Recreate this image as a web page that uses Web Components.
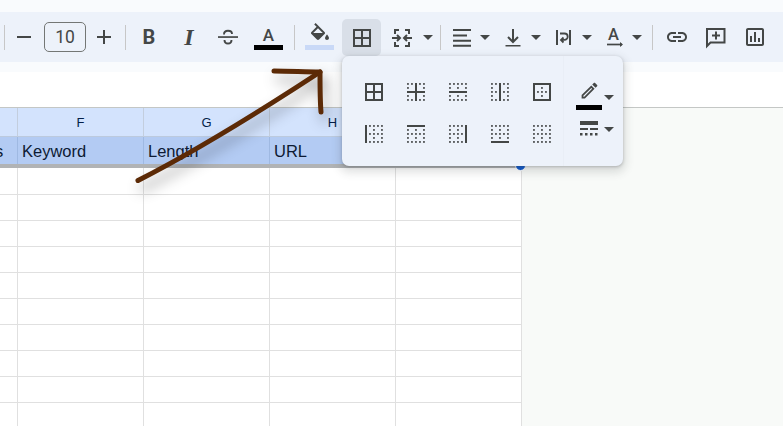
<!DOCTYPE html>
<html>
<head>
<meta charset="utf-8">
<title>Sheets borders</title>
<style>
    html, body { margin: 0; height: 100%; overflow: hidden; background: #fff; }
    body { display: flex; flex-direction: column; height: 426px; position: relative; font-family: "Liberation Sans", Arial, sans-serif; }
</style>
</head>
<body>
<sheet-toolbar>
    <tb-sep style="margin-left:4px"></tb-sep>
    <tb-icon name="minus" style="margin-left:7px"></tb-icon>
    <font-size-box style="margin-left:8px">10</font-size-box>
    <tb-icon name="plus" style="margin-left:6px"></tb-icon>
    <tb-sep style="margin-left:9px"></tb-sep>
    <tb-glyph kind="bold" style="margin-left:11px">B</tb-glyph>
    <tb-glyph kind="italic" style="margin-left:16px">I</tb-glyph>
    <tb-icon name="strike" style="margin-left:15px"></tb-icon>
    <tb-color bar="#000" style="margin-left:14px"><tb-glyph kind="letter">A</tb-glyph></tb-color>
    <tb-sep style="margin-left:11px"></tb-sep>
    <tb-color bar="#c9d9f7" style="margin-left:10px"><tb-icon name="fill"></tb-icon></tb-color>
    <tb-active style="margin-left:8px"><tb-icon name="all"></tb-icon></tb-active>
    <tb-icon name="merge" style="margin-left:9px"></tb-icon>
    <tb-caret style="margin-left:9px"></tb-caret>
    <tb-sep style="margin-left:7px"></tb-sep>
    <tb-icon name="align" style="margin-left:9px"></tb-icon>
    <tb-caret style="margin-left:6px"></tb-caret>
    <tb-icon name="valign" style="margin-left:11px"></tb-icon>
    <tb-caret style="margin-left:6px"></tb-caret>
    <tb-icon name="wrap" style="margin-left:10px"></tb-icon>
    <tb-caret style="margin-left:7px"></tb-caret>
    <tb-rotate style="margin-left:11px">A</tb-rotate>
    <tb-caret style="margin-left:5px"></tb-caret>
    <tb-sep style="margin-left:10px"></tb-sep>
    <tb-icon name="link" style="margin-left:12px"></tb-icon>
    <tb-icon name="comment" style="margin-left:14px"></tb-icon>
    <tb-icon name="chart" style="margin-left:16px"></tb-icon>
</sheet-toolbar>
<formula-strip></formula-strip>
<sheet-area></sheet-area>
<border-menu></border-menu>
<sketch-arrow></sketch-arrow>

<script>
    const INK = '#444746';

    // plain dotted grid, the solid lines get drawn on top of it
    function dotted(solid) {
        let out = '';
        for (let i = 0; i < 5; i++) {
            for (let j = 0; j < 5; j++) {
                if (i % 2 === 0 || j % 2 === 0)
                    out += `<rect x="${3 + 4 * i}" y="${3 + 4 * j}" width="1.9" height="1.9" opacity=".85"/>`;
            }
        }
        return out + solid.map(r => `<rect x="${r[0]}" y="${r[1]}" width="${r[2]}" height="${r[3]}"/>`).join('');
    }

    const ICONS = {
        minus: '<path d="M19 13H5v-2h14v2z"/>',
        plus: '<path d="M19 13h-6v6h-2v-6H5v-2h6V5h2v6h6v2z"/>',
        strike: '<path d="M2 11.2h20v1.7H2z"/><path d="M8 9.5C8 7 9.8 5.8 12 5.8s4 1.2 4 3.2M8.5 15c0 2 1.5 3.5 3.5 3.5s3.5-1.500 3.500-3.500" fill="none" stroke="' + INK + '" stroke-width="1.900"/>',
        fill: '<path d="M16.56 8.94L7.62 0 6.21 1.41l2.38 2.38-5.15 5.15c-.59.59-.59 1.54 0 2.12l5.5 5.5c.29.29.68.44 1.06.44s.77-.15 1.06-.44l5.5-5.5c.59-.58.59-1.53 0-2.12zM5.21 10L10 5.21 14.79 10H5.21zM19 11.5s-2 2.17-2 3.5c0 1.100.9 2 2 2s2-.9 2-2c0-1.330-2-3.500-2-3.500z"/>',
        all: '<path d="M3 3v18h18V3H3zm8 16H5v-6h6v6zm0-8H5V5h6v6zm8 8h-6v-6h6v6zm0-8h-6V5h6v6z"/>',
        merge: '<path d="M9 5H5v4M5 17v4h4M15 5h4v4M19 17v4h-4M2 13h8M7 10l3 3-3 3M22 13h-8M17 10l-3 3 3 3" fill="none" stroke="' + INK + '" stroke-width="2"/>',
        align: '<path d="M3 4h18v2H3zM3 9.500h14v2H3zM3 14.700h18v2H3zM3 19.800h18v2H3z"/>',
        valign: '<path d="M12 4v13M7 12l5 5 5-5" fill="none" stroke="' + INK + '" stroke-width="2"/><path d="M4.500 20h15v1.500h-15z"/>',
        wrap: '<path d="M5 5h2v15H5zM18 5h2v15h-2z"/><path d="M9 8.500h4.500a3.200 3.200 0 0 1 0 6.400H10M12.500 12.500L10 15l2.500 2.500" fill="none" stroke="' + INK + '" stroke-width="1.800"/>',
        link: '<path d="M3.900 12c0-1.710 1.390-3.100 3.100-3.100h4V7H7c-2.760 0-5 2.240-5 5s2.240 5 5 5h4v-1.900H7c-1.710 0-3.100-1.390-3.100-3.100zM8 13h8v-2H8v2zm9-6h-4v1.900h4c1.710 0 3.100 1.390 3.100 3.100s-1.390 3.100-3.100 3.100h-4V17h4c2.760 0 5-2.240 5-5s-2.240-5-5-5z"/>',
        comment: '<path d="M4 4h17.500v13.500H7.500L4 21z" fill="none" stroke="' + INK + '" stroke-width="2"/><path d="M12 6.500h2v3h3v2h-3v3h-2v-3H9v-2h3z"/>',
        chart: '<path d="M19 3H5c-1.100 0-2 .9-2 2v14c0 1.100.9 2 2 2h14c1.100 0 2-.9 2-2V5c0-1.100-.9-2-2-2zm0 16H5V5h14v14zM7 11h2v6H7zm4-4h2v10h-2zm4 6h2v4h-2z"/>',
        pen: '<path d="M14.060 9.020l.92.92L5.920 19H5v-.92l9.060-9.060M17.660 3c-.25 0-.51.100-.7.290l-1.830 1.830 3.750 3.750 1.830-1.830c.39-.39.39-1.020 0-1.410l-2.340-2.340c-.2-.2-.45-.29-.71-.29zm-3.600 3.190L3 17.250V21h3.750L17.810 9.940l-3.750-3.750z"/>',
        inner: dotted([[3, 11, 18, 2], [11, 3, 2, 18]]),
        horizontal: dotted([[3, 11, 18, 2]]),
        vertical: dotted([[11, 3, 2, 18]]),
        outer: dotted([[3, 3, 18, 2], [3, 19, 18, 2], [3, 3, 2, 18], [19, 3, 2, 18]]),
        left: dotted([[3, 3, 2, 18]]),
        top: dotted([[3, 3, 18, 2]]),
        right: dotted([[19, 3, 2, 18]]),
        bottom: dotted([[3, 19, 18, 2]]),
        none: dotted([])
    };

    customElements.define('sheet-toolbar', class extends HTMLElement {
        constructor() {
            super();
            this.attachShadow({ mode: 'open' }).innerHTML = `
                <style>
                    :host { display: block; padding: 12px 0 10px; background: #f9fbfd; flex: none; }
                    div { display: flex; align-items: center; height: 50px; background: #edf2fa; }
                </style>
                <div><slot></slot></div>`;
        }
    });

    customElements.define('tb-sep', class extends HTMLElement {
        constructor() {
            super();
            this.attachShadow({ mode: 'open' }).innerHTML = `
                <style>:host { display: block; flex: none; width: 1px; height: 25px; background: #c7c7c7; }</style>`;
        }
    });

    customElements.define('tb-icon', class extends HTMLElement {
        constructor() {
            super();
            const size = this.getAttribute('size') || 24;
            this.attachShadow({ mode: 'open' }).innerHTML = `
                <style>
                    :host { display: block; flex: none; width: ${size}px; height: ${size}px; }
                    svg { display: block; fill: ${INK}; }
                </style>
                <svg width="${size}" height="${size}" viewBox="0 0 24 24">${ICONS[this.getAttribute('name')]}</svg>`;
        }
    });

    customElements.define('tb-caret', class extends HTMLElement {
        constructor() {
            super();
            this.attachShadow({ mode: 'open' }).innerHTML = `
                <style>
                    :host { display: block; flex: none; width: 10px; height: 5px; }
                    svg { display: block; fill: ${INK}; }
                </style>
                <svg width="10" height="5" viewBox="0 0 10 5"><path d="M0 0l5 5 5-5z"/></svg>`;
        }
    });

    customElements.define('tb-glyph', class extends HTMLElement {
        constructor() {
            super();
            this.attachShadow({ mode: 'open' }).innerHTML = `
                <style>
                    :host {
                        display: block; flex: none; width: 24px; height: 24px; line-height: 24px;
                        text-align: center; color: ${INK}; font-family: Roboto, sans-serif;
                    }
                    :host([kind=bold]) { font-size: 20px; font-weight: 700; }
                    :host([kind=italic]) { font-family: "Liberation Serif", serif; font-size: 24px; font-weight: 700; font-style: italic; }
                    :host([kind=letter]) { font-size: 17px; font-weight: 500; height: 22px; line-height: 22px; margin-top: 1px; }
                </style>
                <slot></slot>`;
        }
    });

    customElements.define('font-size-box', class extends HTMLElement {
        constructor() {
            super();
            this.attachShadow({ mode: 'open' }).innerHTML = `
                <style>
                    :host {
                        display: flex; flex: none; align-items: center; justify-content: center;
                        box-sizing: border-box; width: 42px; height: 30px;
                        border: 1px solid #747775; border-radius: 5px;
                        font: 400 17.5px Roboto, sans-serif; color: ${INK};
                    }
                </style>
                <slot></slot>`;
        }
    });

    customElements.define('tb-color', class extends HTMLElement {
        constructor() {
            super();
            this.attachShadow({ mode: 'open' }).innerHTML = `
                <style>
                    :host {
                        display: flex; flex: none; flex-direction: column; align-items: center;
                        width: 29px; height: 28px; box-sizing: border-box; padding-bottom: 1px;
                    }
                    .top { flex: 1; height: 22px; }
                    .bar { width: 29px; height: 5px; background: ${this.getAttribute('bar')}; }
                </style>
                <div class="top"><slot></slot></div>
                <div class="bar"></div>`;
        }
    });

    customElements.define('tb-active', class extends HTMLElement {
        constructor() {
            super();
            this.attachShadow({ mode: 'open' }).innerHTML = `
                <style>
                    :host {
                        display: flex; flex: none; align-items: center; justify-content: center;
                        width: 39px; height: 37px; margin-top: 1px; border-radius: 5px; background: #d9dfe8;
                    }
                </style>
                <slot></slot>`;
        }
    });

    customElements.define('tb-rotate', class extends HTMLElement {
        constructor() {
            super();
            this.attachShadow({ mode: 'open' }).innerHTML = `
                <style>
                    :host {
                        display: flex; flex: none; flex-direction: column; align-items: center;
                        width: 24px; margin-top: -2px; color: ${INK}; font: 500 16.5px/20px Roboto, sans-serif;
                    }
                    svg { display: block; margin-top: -4px; fill: none; stroke: ${INK}; }
                    span { padding-right: 3px; }
                </style>
                <span><slot></slot></span>
                <svg width="18" height="7" viewBox="0 0 18 7"><path d="M1 3.500h15" stroke-width="1.700"/><path d="M14 1l3 2.500L14 6z" fill="${INK}" stroke="none"/></svg>`;
        }
    });

    customElements.define('formula-strip', class extends HTMLElement {
        constructor() {
            super();
            this.attachShadow({ mode: 'open' }).innerHTML = `
                <style>:host { display: block; flex: none; height: 35px; background: #fff; }</style>`;
        }
    });

    customElements.define('sheet-area', class extends HTMLElement {
        constructor() {
            super();
            const head = ['', 'F', 'G', 'H', 'I'].map(t => `<div class="h">${t}</div>`).join('');
            const title = ['<span class="cut">s</span>', 'Keyword', 'Length', 'URL', ''].map(t => `<div class="t">${t}</div>`).join('');
            const bar = '<div class="frozen"></div>';
            let rows = '';
            for (let r = 0; r < 10; r++) {
                for (let c = 0; c < 5; c++)
                    rows += `<div class="c${r === 0 ? ' first' : ''}"></div>`;
            }
            this.attachShadow({ mode: 'open' }).innerHTML = `
                <style>
                    :host {
                        display: flex; flex: 1; min-height: 0; overflow: hidden; position: relative;
                        background: #f8faf8; border-top: 1px solid #c4c7c5;
                    }
                    .grid {
                        display: grid; flex: none; width: 522px; align-content: start;
                        grid-template-columns: 18px repeat(4, 126px);
                        background: #fff; box-sizing: border-box;
                    }
                    .h, .t, .c { box-sizing: border-box; overflow: hidden; }
                    .h {
                        height: 29px; line-height: 29px; text-align: center; font-size: 13px; color: #041e49;
                        background: #d3e3fd; border-right: 1px solid #c3cede; border-bottom: 1px solid #bccade;
                    }
                    .t {
                        height: 27px; padding-left: 4px; line-height: 29px; font-size: 16.5px; color: #0d1a33;
                        background: #b3cbf3; border-right: 1px solid #9fb9e2; white-space: nowrap;
                    }
                    .cut { display: block; margin-left: -9px; }
                    .frozen { grid-column: 1 / -1; height: 4px; background: #b1b3b5; }
                    .c { height: 26px; border-right: 1px solid #e0e0e0; border-bottom: 1px solid #e0e0e0; }
                    .c.first { height: 27px; }
                    .dot {
                        position: absolute; left: 515px; top: 52px; width: 9px; height: 9px;
                        border-radius: 50%; background: #0b57d0; border: 1px solid #fff;
                    }
                </style>
                <div class="grid">${head}${title}${bar}${rows}</div>
                <div class="dot"></div>`;
        }
    });

    customElements.define('border-menu', class extends HTMLElement {
        constructor() {
            super();
            const names = ['all', 'inner', 'horizontal', 'vertical', 'outer', 'left', 'top', 'right', 'bottom', 'none'];
            const cells = names.map(n => `<div class="cell"><tb-icon name="${n}"></tb-icon></div>`).join('');
            this.attachShadow({ mode: 'open' }).innerHTML = `
                <style>
                    :host {
                        position: absolute; left: 342px; top: 56px; width: 281px; height: 110px;
                        display: flex; box-sizing: border-box; padding: 15px 0 11px 11px;
                        background: #edf2fa; border-radius: 7px;
                        box-shadow: 0 1px 3px rgba(60,64,67,.3), 0 4px 8px 3px rgba(60,64,67,.15);
                    }
                    .cells { display: grid; flex: none; grid-template-columns: repeat(5, 42px); grid-auto-rows: 42px; }
                    .cell { display: flex; align-items: center; justify-content: center; }
                    .side {
                        flex: 1; margin: -15px 0 -11px; padding: 24px 0 0 12px;
                        border-left: 1px solid #e9eef6; display: flex; flex-direction: column;
                    }
                    .row { display: flex; gap: 2px; }
                    .stack { display: flex; flex-direction: column; align-items: center; width: 26px; }
                    .bar { width: 26px; height: 5px; margin-top: 4px; background: #000; }
                    .lines { margin-top: 11px; }
                    .lines svg { display: block; fill: ${INK}; }
                    tb-caret.a { margin-top: 15px; }
                    tb-caret.b { margin-top: 6px; }
                </style>
                <div class="cells">${cells}</div>
                <div class="side">
                    <div class="row">
                        <div class="stack"><tb-icon name="pen" size="21"></tb-icon><div class="bar"></div></div>
                        <tb-caret class="a"></tb-caret>
                    </div>
                    <div class="row lines">
                        <div class="stack">
                            <svg width="18" height="15" viewBox="0 0 18 15">
                                <path d="M0 0h18v4H0zM0 7h8v2H0zM10 7h8v2h-8zM0 12h2.500v2.500H0zM5 12h2.500v2.500H5zM10 12h2.500v2.500H10zM15 12h2.500v2.500H15z"/>
                            </svg>
                        </div>
                        <tb-caret class="b"></tb-caret>
                    </div>
                </div>`;
        }
    });

    customElements.define('sketch-arrow', class extends HTMLElement {
        constructor() {
            super();
            this.attachShadow({ mode: 'open' }).innerHTML = `
                <style>
                    :host { position: absolute; left: 0; top: 0; width: 783px; height: 426px; pointer-events: none; }
                    svg { display: block; filter: drop-shadow(4px 8px 7px rgba(0,0,0,.38)); }
                </style>
                <svg width="783" height="426" fill="none" stroke="#5c2a06" stroke-width="5" stroke-linecap="round" stroke-linejoin="round">
                    <path d="M138 180.500C190 154 262 110 320 72"/>
                    <path d="M274 71C290 71 305 72 320 72C320 86 320 100 321 112"/>
                </svg>`;
        }
    });
</script>
</body>
</html>
